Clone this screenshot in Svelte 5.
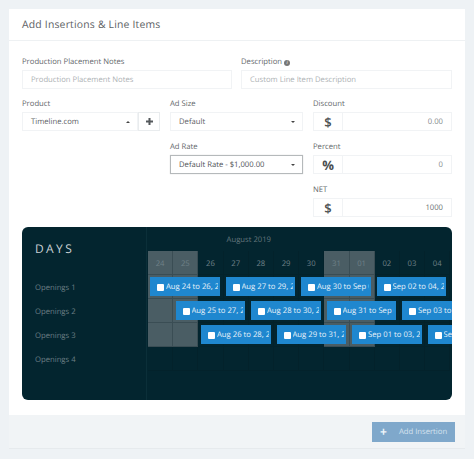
<script lang="ts">
  const days = ['24', '25', '26', '27', '28', '29', '30', '31', '01', '02', '03', '04'];
  const rows = [
    {
      name: 'Openings 1',
      shaded: ['24', '25', '31', '01'],
      offset: 0,
      bars: ['Aug 24 to 26, 2019', 'Aug 27 to 29, 2019', 'Aug 30 to Sep 01, 2019', 'Sep 02 to 04, 2019'],
    },
    {
      name: 'Openings 2',
      shaded: ['24', '25', '31', '01'],
      offset: 1,
      bars: ['Aug 25 to 27, 2019', 'Aug 28 to 30, 2019', 'Aug 31 to Sep 02, 2019', 'Sep 03 to 05, 2019'],
    },
    {
      name: 'Openings 3',
      shaded: ['24', '25', '31', '01'],
      offset: 2,
      bars: ['Aug 26 to 28, 2019', 'Aug 29 to 31, 2019', 'Sep 01 to 03, 2019', 'Sep 04 to 06, 2019'],
    },
    { name: 'Openings 4', shaded: [], offset: 0, bars: [] },
  ];
</script>

<div class="card">
  <h2 class="title">Add Insertions &amp; Line Items</h2>

  <div class="body">
    <div class="two">
      <div class="field">
        <span class="label">Production Placement Notes</span>
        <div class="input ph">Production Placement Notes</div>
      </div>
      <div class="field">
        <span class="label">Description <i class="info">i</i></span>
        <div class="input ph">Custom Line Item Description</div>
      </div>
    </div>

    <div class="three">
      <div class="col">
        <div class="field">
          <span class="label">Product</span>
          <div class="group">
            <div class="input select grow"><span>Timeline.com</span><b class="caret up"></b></div>
            <div class="plus">
              <svg width="7" height="7" viewBox="0 0 9 9"><path d="M3.2 0h2.6v3.2H9v2.6H5.8V9H3.2V5.8H0V3.2h3.2z" fill="#55595c" /></svg>
            </div>
          </div>
        </div>
      </div>

      <div class="col">
        <div class="field">
          <span class="label">Ad Size</span>
          <div class="input select"><span>Default</span><b class="caret"></b></div>
        </div>
        <div class="field">
          <span class="label">Ad Rate</span>
          <div class="input select focus"><span>Default Rate - $1,000.00</span><b class="caret"></b></div>
        </div>
      </div>

      <div class="col">
        <div class="field">
          <span class="label">Discount</span>
          <div class="group">
            <div class="addon">$</div>
            <div class="input num grow">0.00</div>
          </div>
        </div>
        <div class="field">
          <span class="label">Percent</span>
          <div class="group">
            <div class="addon pct">%</div>
            <div class="input num grow">0</div>
          </div>
        </div>
        <div class="field">
          <span class="label">NET</span>
          <div class="group">
            <div class="addon">$</div>
            <div class="input num grow dark">1000</div>
          </div>
        </div>
      </div>
    </div>

    <div class="panel">
      <div class="side">
        <div class="days-title">DAYS</div>
        {#each rows as row}
          <div class="side-row">{row.name}</div>
        {/each}
      </div>
      <div class="chart">
        <div class="month">August 2019</div>
        <div class="grid">
          {#each days as d}
            <div class="cell head" class:shade={d === '24' || d === '25' || d === '31' || d === '01'}>{d}</div>
          {/each}
        </div>
        {#each rows as row}
          <div class="lane">
            <div class="grid">
              {#each days as d}
                <div class="cell" class:shade={row.shaded.includes(d)}></div>
              {/each}
            </div>
            <div class="bars" style="padding-left: {2 + row.offset * 25.5}px">
              {#each row.bars as bar}
                <div class="bar"><i class="check"></i><span>{bar}</span></div>
              {/each}
            </div>
          </div>
        {/each}
      </div>
    </div>
  </div>

  <div class="footer">
    <div class="btn"><span class="btn-plus">+</span><span>Add Insertion</span></div>
  </div>
</div>

<style>
  :global(body) {
    margin: 0;
    background: #eef2f5;
    font-family: "Open Sans", sans-serif;
    text-rendering: geometricPrecision;
  }

  .card {
    box-sizing: border-box;
    width: 456px;
    height: 440px;
    margin: 9px 0 0 9px;
    background: #fff;
    display: flex;
    flex-direction: column;
    color: #6b6f72;
  }

  .title {
    margin: 0;
    height: 31px;
    line-height: 32px;
    box-sizing: content-box;
    padding: 0 13px;
    font-size: 10.4px;
    font-weight: 400;
    color: #5d6164;
    letter-spacing: 0.2px;
    border-bottom: 1px solid #eef1f3;
  }

  .body {
    flex: 1;
    padding: 14px 13px 0;
  }

  .two {
    display: grid;
    grid-template-columns: 210px 211px;
    gap: 9px;
  }

  .three {
    display: grid;
    grid-template-columns: 138px 133px 139px;
    gap: 10px;
    margin-top: 8px;
  }

  .col {
    display: flex;
    flex-direction: column;
    gap: 9px;
  }

  .field {
    display: flex;
    flex-direction: column;
  }

  .label {
    height: 13px;
    line-height: 14px;
    margin-bottom: 2px;
    font-size: 7.7px;
    color: #65696c;
  }

  .info {
    display: inline-block;
    width: 6px;
    height: 6px;
    border-radius: 50%;
    background: #777;
    color: #fff;
    font-size: 5px;
    line-height: 6px;
    text-align: center;
  }

  .input {
    box-sizing: border-box;
    height: 19px;
    line-height: 19px;
    padding: 0 8px;
    border: 1px solid #f1f3f5;
    font-size: 7.7px;
    color: #5e6265;
    background: #fff;
  }

  .ph {
    color: #aeb2b5;
  }

  .select {
    display: flex;
    justify-content: space-between;
    align-items: center;
    padding-right: 7px;
  }

  .select span {
    padding-top: 1px;
  }

  .focus {
    border: 1px solid #b5b9bb;
    box-shadow: 0 0 1px #ccc;
    color: #4f5356;
  }

  .caret {
    width: 0;
    height: 0;
    border-left: 2.5px solid transparent;
    border-right: 2.5px solid transparent;
    border-top: 2.5px solid #444;
  }

  .caret.up {
    border-top: 0;
    border-bottom: 2.5px solid #444;
  }

  .group {
    display: flex;
  }

  .grow {
    flex: 1;
    min-width: 0;
  }

  .plus {
    box-sizing: border-box;
    width: 22px;
    height: 19px;
    display: flex;
    align-items: center;
    justify-content: center;
    border: 1px solid #e9ecee;
  }

  .addon {
    box-sizing: border-box;
    width: 29px;
    height: 19px;
    line-height: 18px;
    text-align: center;
    border: 1px solid #f1f3f5;
    border-right: 0;
    font-size: 13px;
    font-weight: 600;
    color: #4a4e51;
  }

  .pct {
    font-weight: 700;
  }

  .num {
    text-align: right;
    color: #85898c;
  }

  .num.dark {
    color: #6b6f72;
  }

  .panel {
    display: flex;
    height: 173px;
    margin-top: 10px;
    background: #03252f;
    border-radius: 6px;
    overflow: hidden;
  }

  .side {
    width: 125px;
    flex: none;
    border-right: 1px solid #0b2f39;
    box-sizing: border-box;
  }

  .days-title {
    height: 48px;
    padding: 13px 0 0 13px;
    box-sizing: border-box;
    font-size: 12px;
    letter-spacing: 2.4px;
    color: #c9d1d4;
  }

  .side-row {
    height: 24px;
    line-height: 26px;
    padding-left: 13px;
    font-size: 7.7px;
    color: #6c7f85;
  }

  .chart {
    flex: 1;
    min-width: 0;
    padding-left: 1px;
    overflow: hidden;
  }

  .month {
    width: 201.6px;
    height: 24px;
    line-height: 27px;
    text-align: center;
    font-size: 7.7px;
    color: #62757c;
  }

  .grid {
    display: grid;
    grid-template-columns: repeat(12, 25.2px);
  }

  .cell {
    box-sizing: border-box;
    height: 24px;
    border-right: 1px solid #03222b;
    border-bottom: 1px solid #03222b;
  }

  .head {
    line-height: 26px;
    text-align: center;
    font-size: 7.7px;
    color: #6f8188;
  }

  .shade {
    background: #4a5d64;
    border-color: #3a4d54;
  }

  .lane {
    position: relative;
    height: 24px;
  }

  .bars {
    position: absolute;
    top: 2px;
    left: 0;
    right: 0;
    display: flex;
    gap: 6px;
    overflow: hidden;
  }

  .bar {
    box-sizing: border-box;
    flex: none;
    width: 69.5px;
    height: 19px;
    padding: 1px 2px 0 7px;
    display: flex;
    align-items: center;
    gap: 2px;
    overflow: hidden;
    white-space: nowrap;
    background: #1f87cf;
    color: #e6f1f9;
    font-size: 7.7px;
  }

  .bar span {
    overflow: hidden;
  }

  .check {
    flex: none;
    width: 7px;
    height: 7px;
    background: #fff;
    border-radius: 1px;
  }

  .footer {
    height: 33px;
    background: #f1f4f6;
    display: flex;
    justify-content: flex-end;
    align-items: center;
    padding-right: 10px;
    border-bottom: 1px solid #e6eaed;
  }

  .btn {
    box-sizing: border-box;
    width: 83px;
    height: 20px;
    display: flex;
    align-items: center;
    gap: 12px;
    padding-left: 8px;
    background: #7fa8cb;
    color: #d5e2ee;
    font-size: 7.7px;
  }

  .btn-plus {
    font-size: 12px;
    font-weight: 700;
    color: #eef4f9;
    line-height: 1;
  }
</style>
